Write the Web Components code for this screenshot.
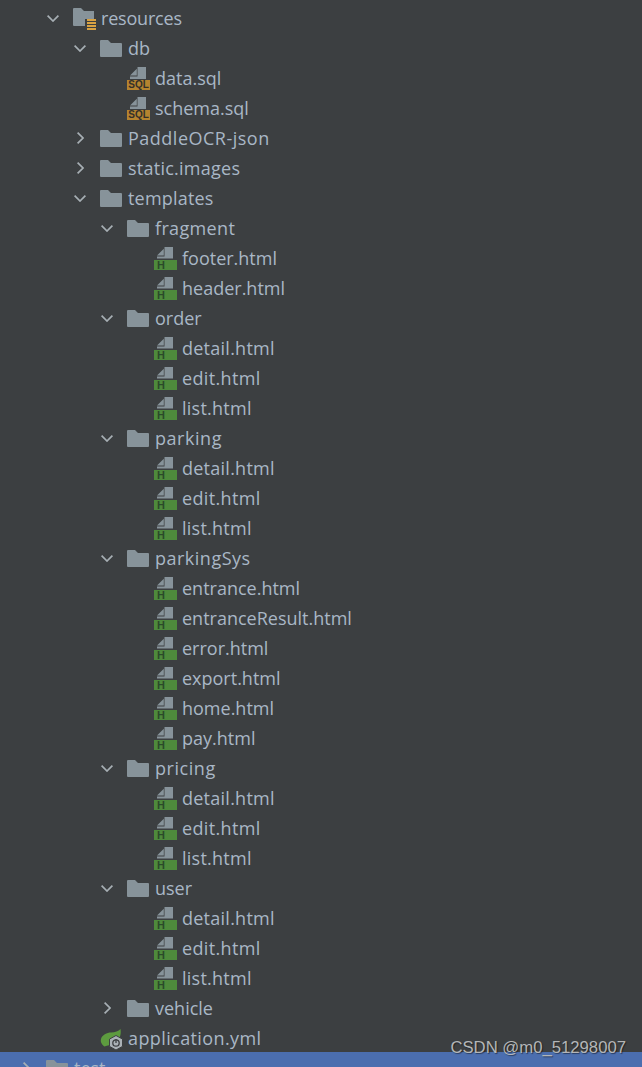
<!DOCTYPE html>
<html>
<head>
<meta charset="utf-8">
<style>
    html, body
    {
        margin: 0;
        height: 100%;
        overflow: hidden;
        background: #3c3f41;
    }
</style>
</head>
<body>
<project-tree>
    <tree-row level="0" arrow="down" icon="resources">resources</tree-row>
    <tree-row level="1" arrow="down" icon="folder">db</tree-row>
    <tree-row level="2" icon="sql">data.sql</tree-row>
    <tree-row level="2" icon="sql">schema.sql</tree-row>
    <tree-row level="1" arrow="right" icon="folder">PaddleOCR-json</tree-row>
    <tree-row level="1" arrow="right" icon="folder">static.images</tree-row>
    <tree-row level="1" arrow="down" icon="folder">templates</tree-row>
    <tree-row level="2" arrow="down" icon="folder">fragment</tree-row>
    <tree-row level="3" icon="html">footer.html</tree-row>
    <tree-row level="3" icon="html">header.html</tree-row>
    <tree-row level="2" arrow="down" icon="folder">order</tree-row>
    <tree-row level="3" icon="html">detail.html</tree-row>
    <tree-row level="3" icon="html">edit.html</tree-row>
    <tree-row level="3" icon="html">list.html</tree-row>
    <tree-row level="2" arrow="down" icon="folder">parking</tree-row>
    <tree-row level="3" icon="html">detail.html</tree-row>
    <tree-row level="3" icon="html">edit.html</tree-row>
    <tree-row level="3" icon="html">list.html</tree-row>
    <tree-row level="2" arrow="down" icon="folder">parkingSys</tree-row>
    <tree-row level="3" icon="html">entrance.html</tree-row>
    <tree-row level="3" icon="html">entranceResult.html</tree-row>
    <tree-row level="3" icon="html">error.html</tree-row>
    <tree-row level="3" icon="html">export.html</tree-row>
    <tree-row level="3" icon="html">home.html</tree-row>
    <tree-row level="3" icon="html">pay.html</tree-row>
    <tree-row level="2" arrow="down" icon="folder">pricing</tree-row>
    <tree-row level="3" icon="html">detail.html</tree-row>
    <tree-row level="3" icon="html">edit.html</tree-row>
    <tree-row level="3" icon="html">list.html</tree-row>
    <tree-row level="2" arrow="down" icon="folder">user</tree-row>
    <tree-row level="3" icon="html">detail.html</tree-row>
    <tree-row level="3" icon="html">edit.html</tree-row>
    <tree-row level="3" icon="html">list.html</tree-row>
    <tree-row level="2" arrow="right" icon="folder">vehicle</tree-row>
    <tree-row level="1" icon="spring">application.yml</tree-row>
    <tree-row level="-1" arrow="right" icon="folder" selected>test</tree-row>
    <csdn-mark slot="mark">CSDN @m0_51298007</csdn-mark>
</project-tree>

<script>
const FOLDER = `<svg width="22" height="17" viewBox="0 0 22 17"><path fill="#87939a" d="M0 1a1 1 0 0 1 1-1h7l3 3h10a1 1 0 0 1 1 1v12a1 1 0 0 1-1 1H1a1 1 0 0 1-1-1z"/></svg>`

const ICONS = {
    folder: FOLDER,
    resources: `<svg width="24" height="22" viewBox="0 0 24 22" style="margin-top:2px">
        <path fill="#87939a" d="M0 1a1 1 0 0 1 1-1h7l3 3h10v8H12v7H1a1 1 0 0 1-1-1z"/>
        <path stroke="#d9a343" stroke-width="2" d="M14 12h9M14 15h9M14 18h9M14 21h9"/>
        </svg>`,
    sql: `<div class="badge-icon">
        <svg width="24" height="12" viewBox="0 0 24 12"><path fill="#87939a" d="M10.500 0H19v12H3V9.500h7.500zM3 8.500l6.800-6.800v6.800z"/></svg>
        <span class="badge sql">SQL</span></div>`,
    html: `<div class="badge-icon">
        <svg width="24" height="12" viewBox="0 0 24 12"><path fill="#87939a" d="M10.500 0H19v11.500H3V9.500h7.500zM3 8.500l6.800-6.800v6.800z"/></svg>
        <span class="badge html">H</span></div>`,
    spring: `<svg width="24" height="22" viewBox="0 0 24 22" style="margin-top:2px">
        <path fill="#5d9b3f" d="M20.500 1c1 6-1 12-7 15-3 1.500-6 1-9 2.500-2-1.500-4.500-4-3.500-7.500 1-4 6-6.500 10-6.500 4 0 7.500-1.500 9.500-3.500z"/>
        <path fill="#aab1b6" stroke="#3c3f41" d="M16 7.500l6.500 3.600v7.300L16 22l-6.500-3.600v-7.300z"/>
        <circle cx="16" cy="15" r="3.200" fill="none" stroke="#3c3f41" stroke-width="1.300"/>
        <path stroke="#3c3f41" stroke-width="1.300" d="M16 11v4"/>
        </svg>`
}

const ARROWS = {
    down: `<svg width="12" height="7" viewBox="0 0 12 7"><path fill="none" stroke="#a7afb4" stroke-width="1.700" d="M.6.6 6 6l5.400-5.400"/></svg>`,
    right: `<svg width="7" height="12" viewBox="0 0 7 12"><path fill="none" stroke="#a7afb4" stroke-width="1.700" d="M.6.6 6 6 .6 11.400"/></svg>`
}

const TRACK = {
    "resources": -.2,
    "PaddleOCR-json": .5,
    "static.images": .25,
    "templates": .2,
    "fragment": .35,
    "parking": .55,
    "parkingSys": .5,
    "pricing": .55,
    "detail.html": .25,
    "edit.html": .35,
    "list.html": .25,
    "application.yml": .4
}

class TreeRow extends HTMLElement
{
    constructor()
    {
        super()
        const shadow = this.attachShadow({mode:"open"})
        const level = Number(this.getAttribute("level"))
        const arrow = ARROWS[this.getAttribute("arrow")] || ""
        const icon = ICONS[this.getAttribute("icon")] || ""
        const track = TRACK[this.textContent] || 0
        shadow.innerHTML = `
            <style>
                :host
                {
                    display: flex;
                    align-items: center;
                    height: 30px;
                    box-sizing: border-box;
                    padding-left: calc(47px + 27px * ${level});
                    color: #a9b7c6;
                    font-family: "Open Sans", sans-serif;
                    font-size: 18px;
                    letter-spacing: ${track}px;
                    white-space: nowrap;
                }

                :host([selected])
                {
                    background: #4b6eaf;
                    height: 31px;
                    margin-top: -1px;
                    padding-top: 1px;
                }

                .arrow
                {
                    width: 12px;
                    margin-right: 14px;
                    display: flex;
                    justify-content: center;
                    flex: none;
                }

                .icon
                {
                    width: 28px;
                    display: flex;
                    align-items: center;
                    flex: none;
                }

                .badge-icon
                {
                    display: flex;
                    flex-direction: column;
                    margin-top: 1px;
                }

                .badge
                {
                    display: block;
                    width: 23px;
                    height: 10px;
                    margin-top: 1px;
                    letter-spacing: 0;
                    font: bold 10px/10px "Liberation Sans", sans-serif;
                }

                .sql
                {
                    background: #b5842f;
                    color: #33302a;
                    text-align: center;
                }

                .html
                {
                    background: #4e8a3c;
                    color: #2b4a2a;
                    padding-left: 3px;
                    font-size: 11px;
                    box-sizing: border-box;
                }

                svg
                {
                    display: block;
                }
            </style>
            <div class="arrow">${arrow}</div>
            <div class="icon">${icon}</div>
            <slot></slot>
        `
    }
}

class ProjectTree extends HTMLElement
{
    constructor()
    {
        super()
        const shadow = this.attachShadow({mode:"open"})
        shadow.innerHTML = `
            <style>
                :host
                {
                    display: block;
                    position: relative;
                    height: 1067px;
                    overflow: hidden;
                    padding-top: 3px;
                    box-sizing: border-box;
                }
            </style>
            <slot></slot>
            <slot name="mark"></slot>
        `
    }
}

class CsdnMark extends HTMLElement
{
    constructor()
    {
        super()
        const shadow = this.attachShadow({mode:"open"})
        shadow.innerHTML = `
            <style>
                :host
                {
                    position: absolute;
                    right: 16px;
                    top: 1038px;
                    color: #b4b6b8;
                    font: 16.7px/20px "Liberation Sans", sans-serif;
                    text-shadow: 1px 1px 1px rgba(0, 0, 0, .45);
                }
            </style>
            <slot></slot>
        `
    }
}

customElements.define("tree-row", TreeRow)
customElements.define("project-tree", ProjectTree)
customElements.define("csdn-mark", CsdnMark)
</script>
</body>
</html>
